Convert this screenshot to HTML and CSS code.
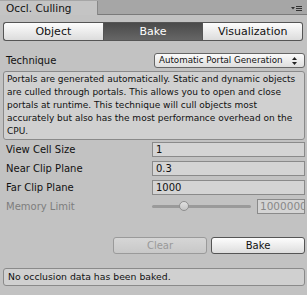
FILE: index.html
```html
<!DOCTYPE html>
<html lang="en">
<head>
    <meta charset="UTF-8">
    <title>Occlusion Culling</title>
    <link rel="stylesheet" href="styles.css">
</head>
<body>
    <div class="tabbar">
        <div class="tab">Occl. Culling</div>
        <div class="tab-menu">
            <svg width="12" height="7" viewBox="0 0 12 7">
                <path d="M0 2 L4 2 L2 4.5 Z" fill="#333"/>
                <rect x="5" y="1" width="6" height="1" fill="#333"/>
                <rect x="5" y="3" width="6" height="1" fill="#333"/>
                <rect x="5" y="5" width="6" height="1" fill="#333"/>
            </svg>
        </div>
    </div>
    <div class="panel">
        <div class="toolbar">
            <div class="seg first">Object</div>
            <div class="seg active">Bake</div>
            <div class="seg last">Visualization</div>
        </div>
        <div class="row technique">
            <span class="label">Technique</span>
            <div class="popup">
                <span>Automatic Portal Generation</span>
                <svg class="arrows" width="5" height="8" viewBox="0 0 5 8">
                    <path d="M0 3 L2.5 0 L5 3 Z" fill="#222"/>
                    <path d="M0 5 L2.5 8 L5 5 Z" fill="#222"/>
                </svg>
            </div>
        </div>
        <div class="helpbox">Portals are generated automatically. Static and dynamic objects are culled through portals. This allows you to open and close portals at runtime. This technique will cull objects most accurately but also has the most performance overhead on the CPU.</div>
        <div class="row">
            <span class="label">View Cell Size</span>
            <div class="field">1</div>
        </div>
        <div class="row">
            <span class="label">Near Clip Plane</span>
            <div class="field">0.3</div>
        </div>
        <div class="row">
            <span class="label">Far Clip Plane</span>
            <div class="field">1000</div>
        </div>
        <div class="row disabled">
            <span class="label">Memory Limit</span>
            <div class="slider">
                <div class="track"><div class="thumb"></div></div>
                <div class="field small">1000000</div>
            </div>
        </div>
        <div class="actions">
            <div class="btn off">Clear</div>
            <div class="btn">Bake</div>
        </div>
        <div class="status">No occlusion data has been baked.</div>
    </div>
</body>
</html>
```

FILE: styles.css
```css
body {
    margin: 0;
    background: #c2c2c2;
    font-family: "DejaVu Sans", sans-serif;
    font-size: 10px;
    color: #111;
    width: 307px;
    height: 295px;
    overflow: hidden;
}
.tabbar {
    height: 14px;
    background: #a6a6a6;
    border-bottom: 1px solid #7a7a7a;
    display: flex;
    align-items: flex-end;
}
.tab {
    width: 98px;
    height: 14px;
    background: #c4c4c4;
    border-right: 1px solid #888;
    padding-left: 6px;
    box-sizing: border-box;
    font-size: 10.5px;
    line-height: 14px;
    margin-bottom: -1px;
}
.tab-menu {
    margin-left: auto;
    margin-right: 4px;
    height: 14px;
    display: flex;
    align-items: flex-end;
    padding-bottom: 2px;
    box-sizing: border-box;
}
.panel {
    padding: 7px 2px 0 3px;
}
.toolbar {
    display: flex;
    height: 19px;
    margin-right: 2px;
}
.seg {
    flex: 1;
    text-align: center;
    line-height: 17px;
    font-size: 11px;
    border: 1px solid #555;
    background: linear-gradient(#fdfdfd, #dcdcdc);
}
.seg.first { border-radius: 3px 0 0 3px; border-right: none; }
.seg.last { border-radius: 0 3px 3px 0; border-left: none; }
.seg.active {
    background: linear-gradient(#4a4a4a, #666);
    color: #fff;
}
.row {
    display: flex;
    align-items: center;
    height: 19px;
    padding-left: 3px;
}
.label {
    width: 146px;
    flex: none;
}
.technique {
    margin-top: 11px;
    height: 17px;
}
.popup {
    flex: 1;
    margin-left: 2px;
    height: 15px;
    box-sizing: border-box;
    line-height: 13px;
    font-size: 8.7px;
    white-space: nowrap;
    border: 1px solid #666;
    border-radius: 3px;
    background: linear-gradient(#fbfbfb, #dedede);
    padding: 0 7px 0 4px;
    display: flex;
    align-items: center;
    justify-content: space-between;
}
.helpbox {
    margin-top: 2px;
    border: 1px solid #8a8a8a;
    border-radius: 3px;
    background: #d0d0d0;
    font-size: 9px;
    line-height: 13px;
    padding: 1px 3px;
}
.field {
    flex: 1;
    height: 15px;
    box-sizing: border-box;
    line-height: 13px;
    background: #d4d4d4;
    border: 1px solid #8a8a8a;
    padding-left: 3px;
}
.disabled .label { color: #7d7d7d; }
.slider {
    flex: 1;
    display: flex;
    align-items: center;
}
.track {
    flex: 1;
    height: 3px;
    background: #9a9a9a;
    border-radius: 2px;
    margin-right: 6px;
    position: relative;
}
.thumb {
    position: absolute;
    left: 27px;
    top: -4px;
    width: 10px;
    height: 10px;
    border-radius: 50%;
    background: linear-gradient(#e0e0e0, #c4c4c4);
    border: 1px solid #8f8f8f;
    box-sizing: border-box;
}
.field.small {
    flex: none;
    width: 48px;
    font-size: 10.5px;
    padding-left: 2px;
    color: #888;
    overflow: hidden;
    white-space: nowrap;
}
.actions {
    display: flex;
    justify-content: flex-end;
    gap: 4px;
    margin-top: 21px;
}
.btn {
    width: 94px;
    height: 17px;
    box-sizing: border-box;
    line-height: 15px;
    text-align: center;
    border: 1px solid #555;
    border-radius: 3px;
    background: linear-gradient(#fdfdfd, #dddddd);
}
.btn.off {
    color: #999;
    border-color: #9a9a9a;
    background: linear-gradient(#d6d6d6, #c8c8c8);
}
.status {
    margin-top: 14px;
    height: 18px;
    box-sizing: border-box;
    line-height: 16px;
    border: 1px solid #8a8a8a;
    border-radius: 3px;
    background: #d0d0d0;
    font-size: 9.3px;
    padding-left: 4px;
}
```
